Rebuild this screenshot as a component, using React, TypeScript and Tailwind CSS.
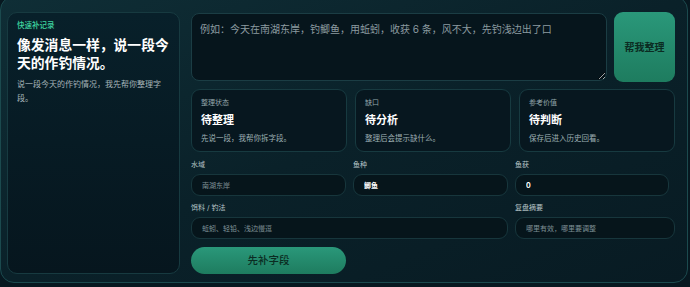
import { useState } from 'react';

type Card = { label: string; title: string; desc: string };

const cards: Card[] = [
  { label: '整理状态', title: '待整理', desc: '先说一段，我帮你拆字段。' },
  { label: '缺口', title: '待分析', desc: '整理后会提示缺什么。' },
  { label: '参考价值', title: '待判断', desc: '保存后进入历史回看。' }
];

const inputCls =
  'h-[22px] w-full rounded-[9px] border border-[#17363c] bg-[#06151b] px-[10px] text-[7px] text-white outline-none placeholder:text-[#7f9196]';

const App = () => {
  const [note, setNote] = useState('');
  const [fish, setFish] = useState('鲫鱼');
  const [catchCount, setCatchCount] = useState('0');

  return (
    <div
      className="h-[287px] w-[690px] overflow-hidden bg-[#071820]"
      style={{ fontFamily: "Inter, 'Noto Sans CJK SC', sans-serif" }}>
      <div className="-mt-[4px] grid h-[287px] w-[688px] grid-cols-[173px_484px] gap-[11px] rounded-[14px] border border-[#1b4a4e] bg-gradient-to-br from-[#0f2e36] via-[#0a2129] to-[#081b23] pb-[10px] pl-[6px] pt-[15px]">
        {/* left intro panel */}
        <div className="rounded-[10px] border border-[#173a40] bg-gradient-to-b from-[#08202a] to-[#06161e] pl-[9px] pr-[3px] pt-[8px]">
          <div className="text-[7.5px] font-medium leading-[10px] text-[#3fd6a0]">
            快速补记录
          </div>
          <h1 className="mt-[5px] text-[13.8px] font-bold leading-[18px] text-white">
            像发消息一样，说一段今天的作钓情况。
          </h1>
          <p className="mt-[5px] pr-[6px] text-[8px] leading-[14px] text-[#a6b5b9]">
            说一段今天的作钓情况，我先帮你整理字段。
          </p>
        </div>

        {/* right form */}
        <div className="flex flex-col">
          <div className="flex gap-[7px]">
            <textarea
              value={note}
              onChange={e => setNote(e.target.value)}
              placeholder="例如：今天在南湖东岸，钓鲫鱼，用蚯蚓，收获 6 条，风不大，先钓浅边出了口"
              className="mt-[1px] h-[68px] w-[416px] resize-y rounded-[8px] border border-[#1b3d44] bg-[#06151c] px-[8px] py-[8px] text-[10px] leading-[14px] text-white outline-none placeholder:text-[#8c9ba0]"
            />
            <button className="h-[70px] w-[61px] rounded-[9px] bg-gradient-to-b from-[#2a987a] to-[#1e7c5f] text-[10px] font-bold text-[#0b2c22]">
              帮我整理
            </button>
          </div>

          <div className="mt-[7px] grid grid-cols-3 gap-[8px]">
            {cards.map(card => (
              <div
                key={card.label}
                className="h-[63px] rounded-[9px] border border-[#173a40] bg-[#07171f] px-[9px] pt-[8px]">
                <div className="text-[7px] leading-[10px] text-[#95a7ab]">{card.label}</div>
                <div className="mt-[5px] text-[11px] font-bold leading-[14px] text-white">
                  {card.title}
                </div>
                <div className="mt-[7px] text-[7.5px] leading-[10px] text-[#9fb0b4]">
                  {card.desc}
                </div>
              </div>
            ))}
          </div>

          <div className="mt-[8px] grid grid-cols-[155px_155px_160px] gap-x-[7px]">
            <label className="flex flex-col gap-[4px]">
              <span className="text-[7px] leading-[10px] text-[#b9c6c9]">水域</span>
              <input className={inputCls} placeholder="南湖东岸" />
            </label>
            <label className="flex flex-col gap-[4px]">
              <span className="text-[7px] leading-[10px] text-[#b9c6c9]">鱼种</span>
              <input
                className={inputCls + ' font-bold'}
                value={fish}
                onChange={e => setFish(e.target.value)}
              />
            </label>
            <label className="flex flex-col gap-[4px]">
              <span className="text-[7px] leading-[10px] text-[#b9c6c9]">鱼获</span>
              <input
                className={inputCls + ' !w-[154px] font-bold'}
                value={catchCount}
                onChange={e => setCatchCount(e.target.value)}
              />
            </label>

            <label className="col-span-2 mt-[7px] flex flex-col gap-[4px]">
              <span className="text-[7px] leading-[10px] text-[#b9c6c9]">饵料 / 钓法</span>
              <input className={inputCls} placeholder="蚯蚓、轻铅、浅边慢逗" />
            </label>
            <label className="mt-[7px] flex flex-col gap-[4px]">
              <span className="text-[7px] leading-[10px] text-[#b9c6c9]">复盘摘要</span>
              <input className={inputCls} placeholder="哪里有效，哪里要调整" />
            </label>
          </div>

          <button className="mt-[8px] h-[27px] w-[155px] rounded-full bg-gradient-to-b from-[#2a987a] to-[#1e7c5f] text-[10.5px] font-medium text-[#0b2c22]">
            先补字段
          </button>
        </div>
      </div>
    </div>
  );
};

export default App;
